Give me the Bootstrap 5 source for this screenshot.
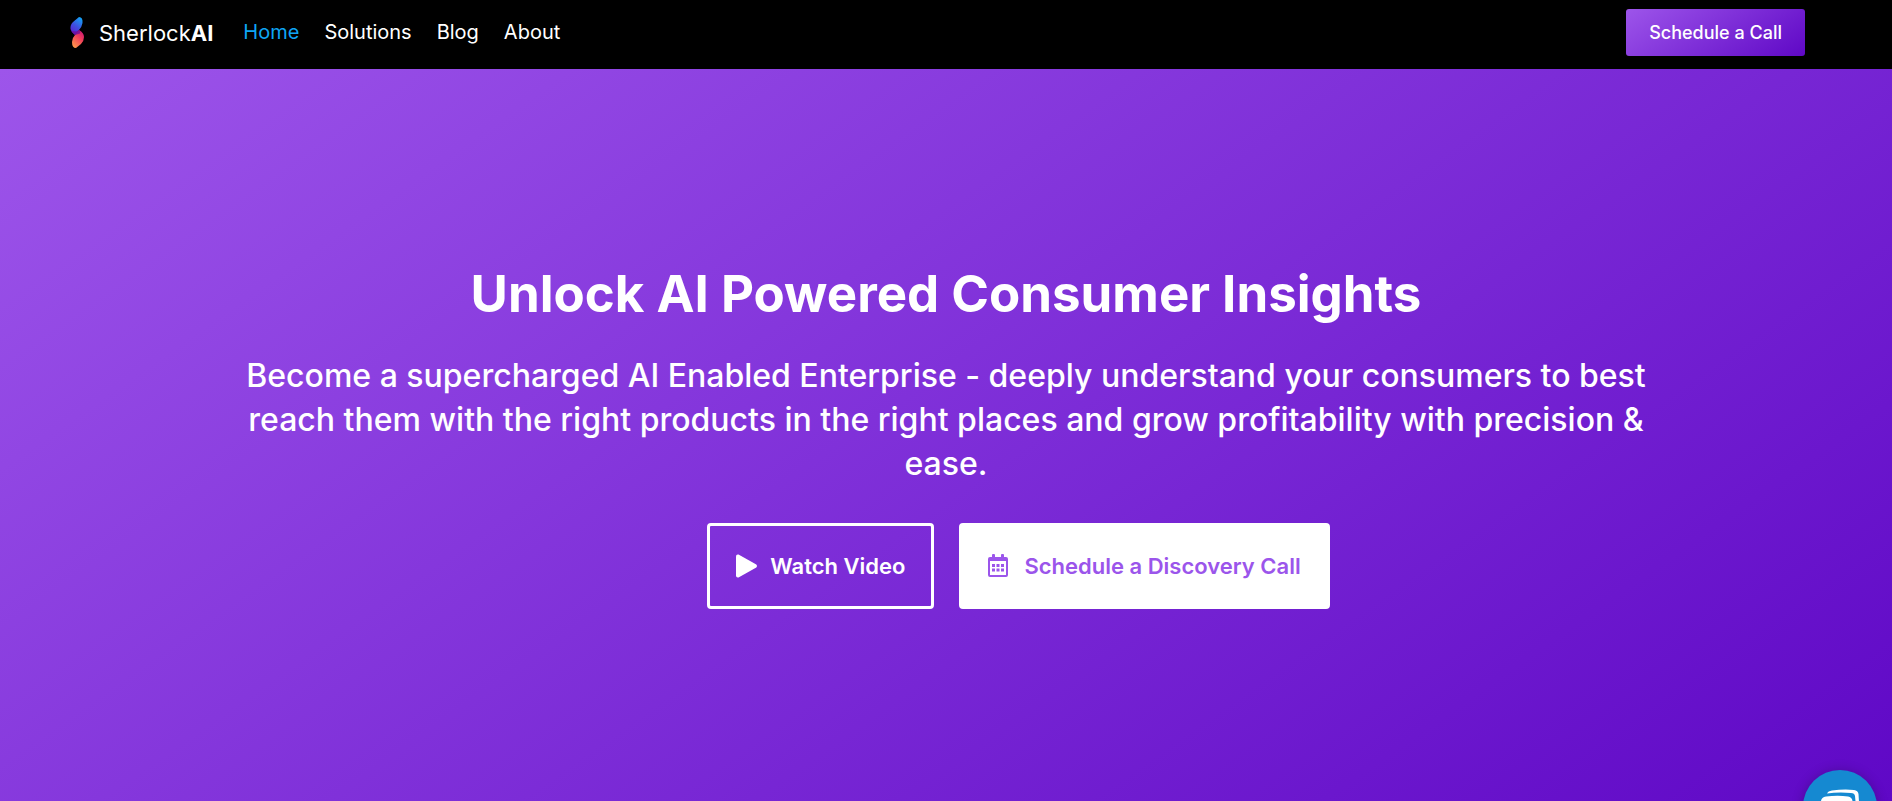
<!DOCTYPE html>
<html lang="en">
<head>
<meta charset="utf-8">
<meta name="viewport" content="width=device-width, initial-scale=1">
<title>SherlockAI</title>
<link href="https://cdn.jsdelivr.net/npm/bootstrap@5.3.0/dist/css/bootstrap.min.css" rel="stylesheet">
<style>
:root { --brand-gradient: linear-gradient(145deg, #9d55ea 0%, #5f08c6 100%); }
body { font-family: Inter, "Liberation Sans", sans-serif; }
.site-nav { background: #000; padding: 9px 87px 13px 67px; }
.brand-text { font-size: 22px; line-height: 26px; color: #fff; }
.brand-text b { font-weight: 700; }
.site-nav .navbar-nav { margin-left: 30px; column-gap: 25px; }
.site-nav .navbar-nav .nav-link { font-size: 20px; line-height: 30px; padding: 7px 0 9px; color: #fff; }
.site-nav .navbar-nav .nav-link.active { color: #0ea5f5; }
.btn-call { background: var(--brand-gradient); color: #fff; font-size: 18px; font-weight: 500; line-height: 27px; padding: 10px 23px; border: 0; border-radius: 3px; }
.btn-call:hover { color: #fff; }
.hero { background: var(--brand-gradient); color: #fff; }
.hero-title { font-size: 51px; line-height: 64px; font-weight: 700; margin-bottom: 28px; }
.hero-text { font-size: 32px; line-height: 44px; font-weight: 500; margin-bottom: 37px; }
.hero-actions { padding-left: 145px; gap: 25px; }
.btn-hero { font-size: 22px; line-height: 30px; font-weight: 600; padding: 25px 26px; border: 3px solid #fff; border-radius: 4px; }
.btn-watch, .btn-watch:hover { color: #fff; }
.btn-discover, .btn-discover:hover { background: #fff; color: #9b55eb; }
.chat-launcher { right: 15px; bottom: -43px; width: 74px; height: 74px; background: #1589d1; box-shadow: 0 1px 12px rgba(0,0,0,.25); }
</style>
</head>
<body class="d-flex flex-column min-vh-100 overflow-hidden">
<nav class="site-nav navbar navbar-expand">
  <a class="navbar-brand d-flex align-items-center p-0 m-0" href="#">
    <svg width="20" height="34" viewBox="0 0 20 34" aria-hidden="true">
      <defs>
        <linearGradient id="blueLeaf" x1="0.8" y1="0" x2="0.3" y2="1"><stop offset="0" stop-color="#12a5f5"/><stop offset=".55" stop-color="#3f4ee0"/><stop offset="1" stop-color="#5b1fd0"/></linearGradient>
        <linearGradient id="redLeaf" x1="0.8" y1="0" x2="0.2" y2="1"><stop offset="0" stop-color="#c81575"/><stop offset=".4" stop-color="#f03e5a"/><stop offset="1" stop-color="#ff9a4a"/></linearGradient>
      </defs>
      <path d="M12 1Q16 1 15.500 7Q15 10.500 12 14L8 19Q4 16 3.500 13Q3 9 6 6Z" fill="url(#blueLeaf)"/>
      <path d="M12 14Q17 17 17 21Q17 25 14 28L9 32Q5 32 5 26Q5 22 8 19Z" fill="url(#redLeaf)"/>
      <path d="M8 19Q5.500 17 4.500 15L9 15.500L12 14Q14 15.500 13 17.500Z" fill="#700b9c" fill-opacity=".8"/>
    </svg>
    <span class="brand-text ms-2 ps-1">Sherlock<b>AI</b></span>
  </a>
  <ul class="navbar-nav">
    <li class="nav-item"><a class="nav-link active" href="#" aria-current="page">Home</a></li>
    <li class="nav-item"><a class="nav-link" href="#">Solutions</a></li>
    <li class="nav-item"><a class="nav-link" href="#">Blog</a></li>
    <li class="nav-item"><a class="nav-link" href="#">About</a></li>
  </ul>
  <button type="button" class="btn btn-call ms-auto">Schedule a Call</button>
</nav>
<main class="hero flex-grow-1 d-flex flex-column justify-content-center align-items-center text-center">
  <h1 class="hero-title">Unlock AI Powered Consumer Insights</h1>
  <p class="hero-text w-75">Become a supercharged AI Enabled Enterprise - deeply understand your consumers to best reach them with the right products in the right places and grow profitability with precision &amp; ease.</p>
  <div class="hero-actions d-flex justify-content-center">
    <button type="button" class="btn btn-hero btn-watch d-flex align-items-center">
      <svg width="22" height="24" viewBox="0 0 22 24" fill="currentColor" aria-hidden="true"><path d="M0 2.500Q0 0 2.500 .5L20.300 10.500Q22 12 20.300 13.500L2.500 23.500Q0 24 0 21.500Z"/></svg>
      <span class="ms-2 ps-1">Watch Video</span>
    </button>
    <button type="button" class="btn btn-hero btn-discover d-flex align-items-center">
      <svg width="24" height="24" viewBox="0 0 24 24" fill="currentColor" aria-hidden="true"><path fill-rule="evenodd" d="M4 1Q4 0 5 0H6Q7 0 7 1V3H13V1Q13 0 14 0H15Q16 0 16 1V3H18Q20 3 20 5V21Q20 23 18 23H2Q0 23 0 21V5Q0 3 2 3H4ZM2 7V21H18V7Z"/><path d="M4 10h3v3H4zM8.500 10h3v3h-3zM13 10h3v3h-3zM4 14.500h3v3H4zM8.500 14.500h3v3h-3zM13 14.500h3v3h-3z"/></svg>
      <span class="ms-2 ps-1">Schedule a Discovery Call</span>
    </button>
  </div>
</main>
<button type="button" class="chat-launcher position-fixed rounded-circle border-0 p-0" aria-label="Open chat">
  <svg class="d-block mx-auto" width="40" height="36" viewBox="0 0 40 36" fill="#fff" aria-hidden="true"><path d="M7 4.500Q8 2 12 1.500Q24 0 34 1Q38 1.500 38.500 5Q40 15 38 25L36 24Q36 14 35 7Q34.500 4 31 4Q18 3 7 4.500Z"/><path d="M1 12Q1.500 8 6 7.500Q18 6 28 7.500Q32 8 32.500 12Q33.500 20 32 27L33 34L26 31Q14 32 5 30.500Q1 30 .5 26Q0 19 1 12Z"/></svg>
</button>
<script src="https://cdn.jsdelivr.net/npm/bootstrap@5.3.0/dist/js/bootstrap.bundle.min.js"></script>
</body>
</html>
